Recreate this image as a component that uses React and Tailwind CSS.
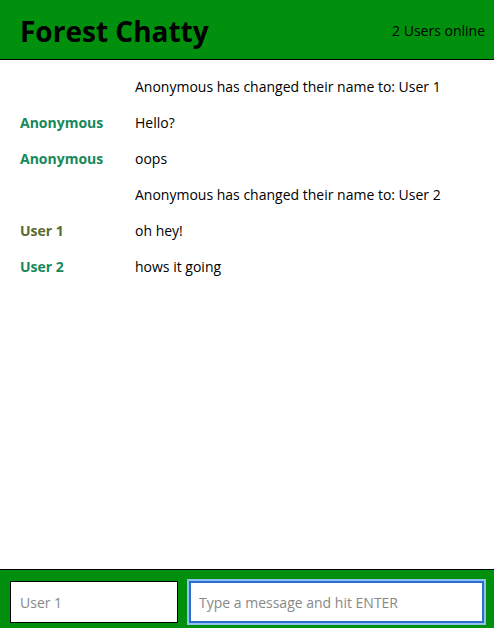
import React from "react";

const messages = [
  { user: "", text: "Anonymous has changed their name to: User 1" },
  { user: "Anonymous", color: "text-[#17885a]", text: "Hello?" },
  { user: "Anonymous", color: "text-[#17885a]", text: "oops" },
  { user: "", text: "Anonymous has changed their name to: User 2" },
  { user: "User 1", color: "text-[#5b6a2e]", text: "oh hey!" },
  { user: "User 2", color: "text-[#17885a]", text: "hows it going" },
];

const App = () => {
  return (
    <div
      className="h-[628px] w-full flex flex-col bg-white text-black"
      style={{ fontFamily: '"Open Sans", sans-serif' }}
    >
      {/* Header */}
      <header className="h-[60px] bg-[#00900e] border-b border-black flex items-center justify-between pl-5 pr-[9px] shrink-0">
        <h1 className="text-[28px] font-bold leading-none pt-[2px]">Forest Chatty</h1>
        <span className="text-[14px] pt-[2px]">2 Users online</span>
      </header>

      {/* Messages */}
      <main className="flex-1 pt-[8px]">
        {messages.map((m, i) => (
          <div key={i} className="flex h-[36px] items-center text-[14px]">
            <div className={`w-[135px] pl-5 font-bold ${m.color || ""}`}>{m.user}</div>
            <div>{m.text}</div>
          </div>
        ))}
      </main>

      {/* Footer */}
      <footer className="h-[59px] bg-[#00900e] border-t border-black flex items-start gap-[11px] pt-[11px] px-[10px] shrink-0">
        <input
          className="w-[168px] h-[42px] bg-white border border-black px-[9px] text-[14px] outline-none placeholder-[#888]"
          placeholder="User 1"
        />
        <input
          className="flex-1 h-[42px] bg-white border-2 border-[#2a6fc9] px-[8px] text-[14px] outline-none ring-2 ring-[#8fc0f0] placeholder-[#888]"
          placeholder="Type a message and hit ENTER"
          autoFocus
        />
      </footer>
    </div>
  );
};

export default App;
